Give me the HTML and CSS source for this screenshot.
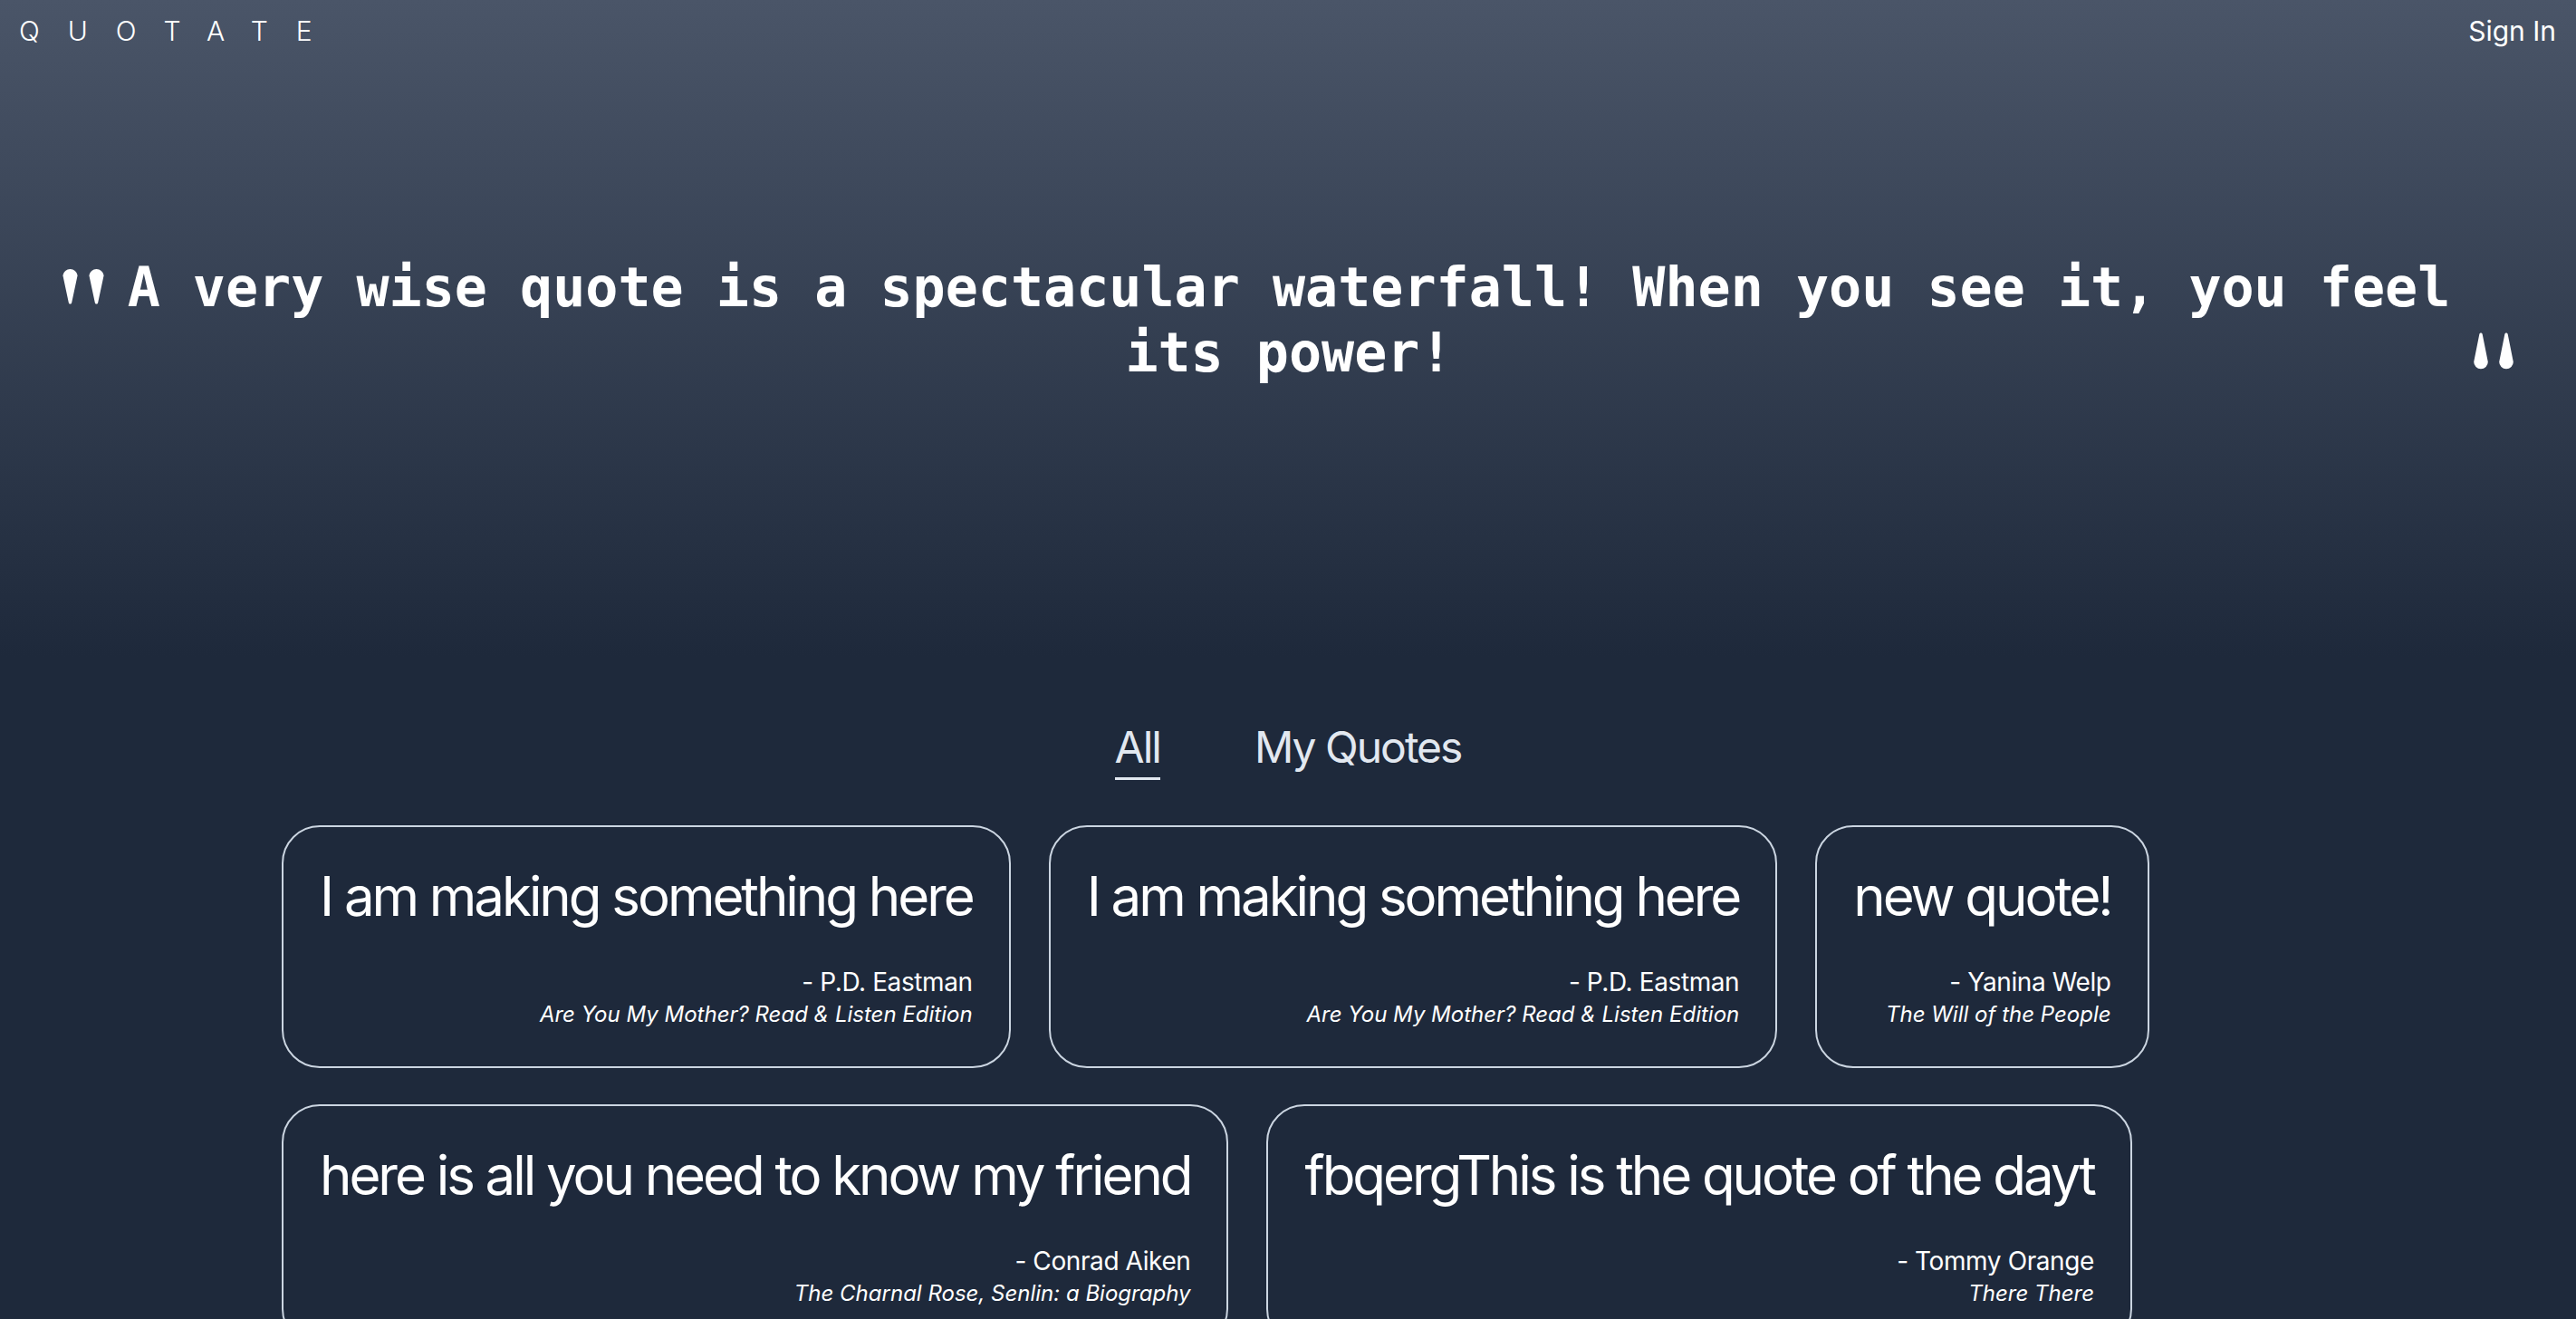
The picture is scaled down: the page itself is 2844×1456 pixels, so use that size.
FILE: index.html
```html
<!DOCTYPE html>
<html lang="en">
<head>
<meta charset="utf-8">
<title>Quotate</title>
<link rel="stylesheet" href="styles.css">
</head>
<body>
<div class="top">
  <header class="nav">
    <span class="logo">QUOTATE</span>
    <a class="signin">Sign In</a>
  </header>
  <section class="hero">
    <svg class="qmark qmark-left" viewBox="0 0 46 41" aria-hidden="true">
      <g transform="rotate(180 23 20.5)">
        <path d="M6.8 2 C7.2 0 9.8 0 10.2 2 L16.6 32 A8.2 8.2 0 0 1 0.4 32 Z"/>
        <path d="M35.8 2 C36.2 0 38.8 0 39.2 2 L45.6 32 A8.2 8.2 0 0 1 29.4 32 Z"/>
      </g>
    </svg>
    <p class="hero-text">A very wise quote is a spectacular waterfall! When you see it, you feel its power!</p>
    <svg class="qmark qmark-right" viewBox="0 0 44 41" aria-hidden="true">
      <path d="M6.3 2 C6.7 0 9.3 0 9.7 2 L15.8 32.5 A7.8 7.8 0 0 1 0.2 32.5 Z"/>
      <path d="M34.3 2 C34.7 0 37.3 0 37.7 2 L43.8 32.5 A7.8 7.8 0 0 1 28.2 32.5 Z"/>
    </svg>
  </section>
</div>
<main class="main">
  <nav class="tabs">
    <span class="tab tab-active">All</span>
    <span class="tab">My Quotes</span>
  </nav>
  <div class="cards">
    <article class="card">
      <p class="card-quote">I am making something here</p>
      <p class="card-author">- P.D. Eastman</p>
      <p class="card-book">Are You My Mother? Read &amp; Listen Edition</p>
    </article>
    <article class="card">
      <p class="card-quote">I am making something here</p>
      <p class="card-author">- P.D. Eastman</p>
      <p class="card-book">Are You My Mother? Read &amp; Listen Edition</p>
    </article>
    <article class="card">
      <p class="card-quote">new quote!</p>
      <p class="card-author">- Yanina Welp</p>
      <p class="card-book">The Will of the People</p>
    </article>
    <article class="card">
      <p class="card-quote">here is all you need to know my friend</p>
      <p class="card-author">- Conrad Aiken</p>
      <p class="card-book">The Charnal Rose, Senlin: a Biography</p>
    </article>
    <article class="card">
      <p class="card-quote">fbqergThis is the quote of the dayt</p>
      <p class="card-author">- Tommy Orange</p>
      <p class="card-book">There There</p>
    </article>
  </div>
</main>
</body>
</html>
```

FILE: styles.css
```css
* {
  box-sizing: border-box;
}

html, body {
  margin: 0;
  padding: 0;
}

body {
  background: #1e293b;
  color: #ffffff;
  font-family: "Inter", "Liberation Sans", sans-serif;
  min-height: 1456px;
}

.top {
  height: 725px;
  background: linear-gradient(to bottom, #4a5568 0%, #1e293b 100%);
}

.nav {
  display: flex;
  justify-content: space-between;
  align-items: center;
  padding: 16px 22px 16px 21px;
  font-size: 30px;
}

.logo {
  font-weight: 300;
  letter-spacing: 31px;
  color: #ffffff;
}

.signin {
  color: #ffffff;
  cursor: pointer;
}

.hero {
  display: flex;
  align-items: flex-start;
  gap: 20px;
  padding: 0 69px;
  margin-top: 213px;
}

.qmark {
  flex: none;
  fill: #ffffff;
}

.qmark-left {
  width: 46px;
  height: 41px;
  margin-top: 14px;
}

.qmark-right {
  width: 44px;
  height: 41px;
  align-self: flex-end;
  margin-bottom: 17px;
}

.hero-text {
  flex: 1;
  margin: 0;
  text-align: center;
  font-family: "DejaVu Sans Mono", monospace;
  font-weight: bold;
  font-size: 60px;
  line-height: 72px;
  color: #ffffff;
}

.main {
  padding-top: 70px;
}

.tabs {
  display: flex;
  justify-content: center;
  gap: 104px;
  font-size: 48px;
  letter-spacing: -2px;
  color: #e2e8f0;
}

.tab {
  padding-bottom: 4px;
  border-bottom: 3px solid transparent;
  cursor: pointer;
}

.tab-active {
  border-bottom-color: #e2e8f0;
}

.cards {
  width: 2222px;
  margin: 50px auto 0;
  display: flex;
  flex-wrap: wrap;
  column-gap: 42px;
  row-gap: 40px;
}

.card {
  border: 2px solid #cbd5e1;
  border-radius: 42px;
  padding: 40px 40px 43px;
  text-align: right;
}

.card p {
  margin: 0;
}

.card-quote {
  font-size: 60px;
  letter-spacing: -3.05px;
  text-align: left;
  color: #ffffff;
}

.card-author {
  margin-top: 42px !important;
  font-size: 28px;
  letter-spacing: -0.4px;
  color: #ffffff;
}

.card-book {
  margin-top: 4px !important;
  font-size: 24px;
  font-style: italic;
  color: #ffffff;
}
```
